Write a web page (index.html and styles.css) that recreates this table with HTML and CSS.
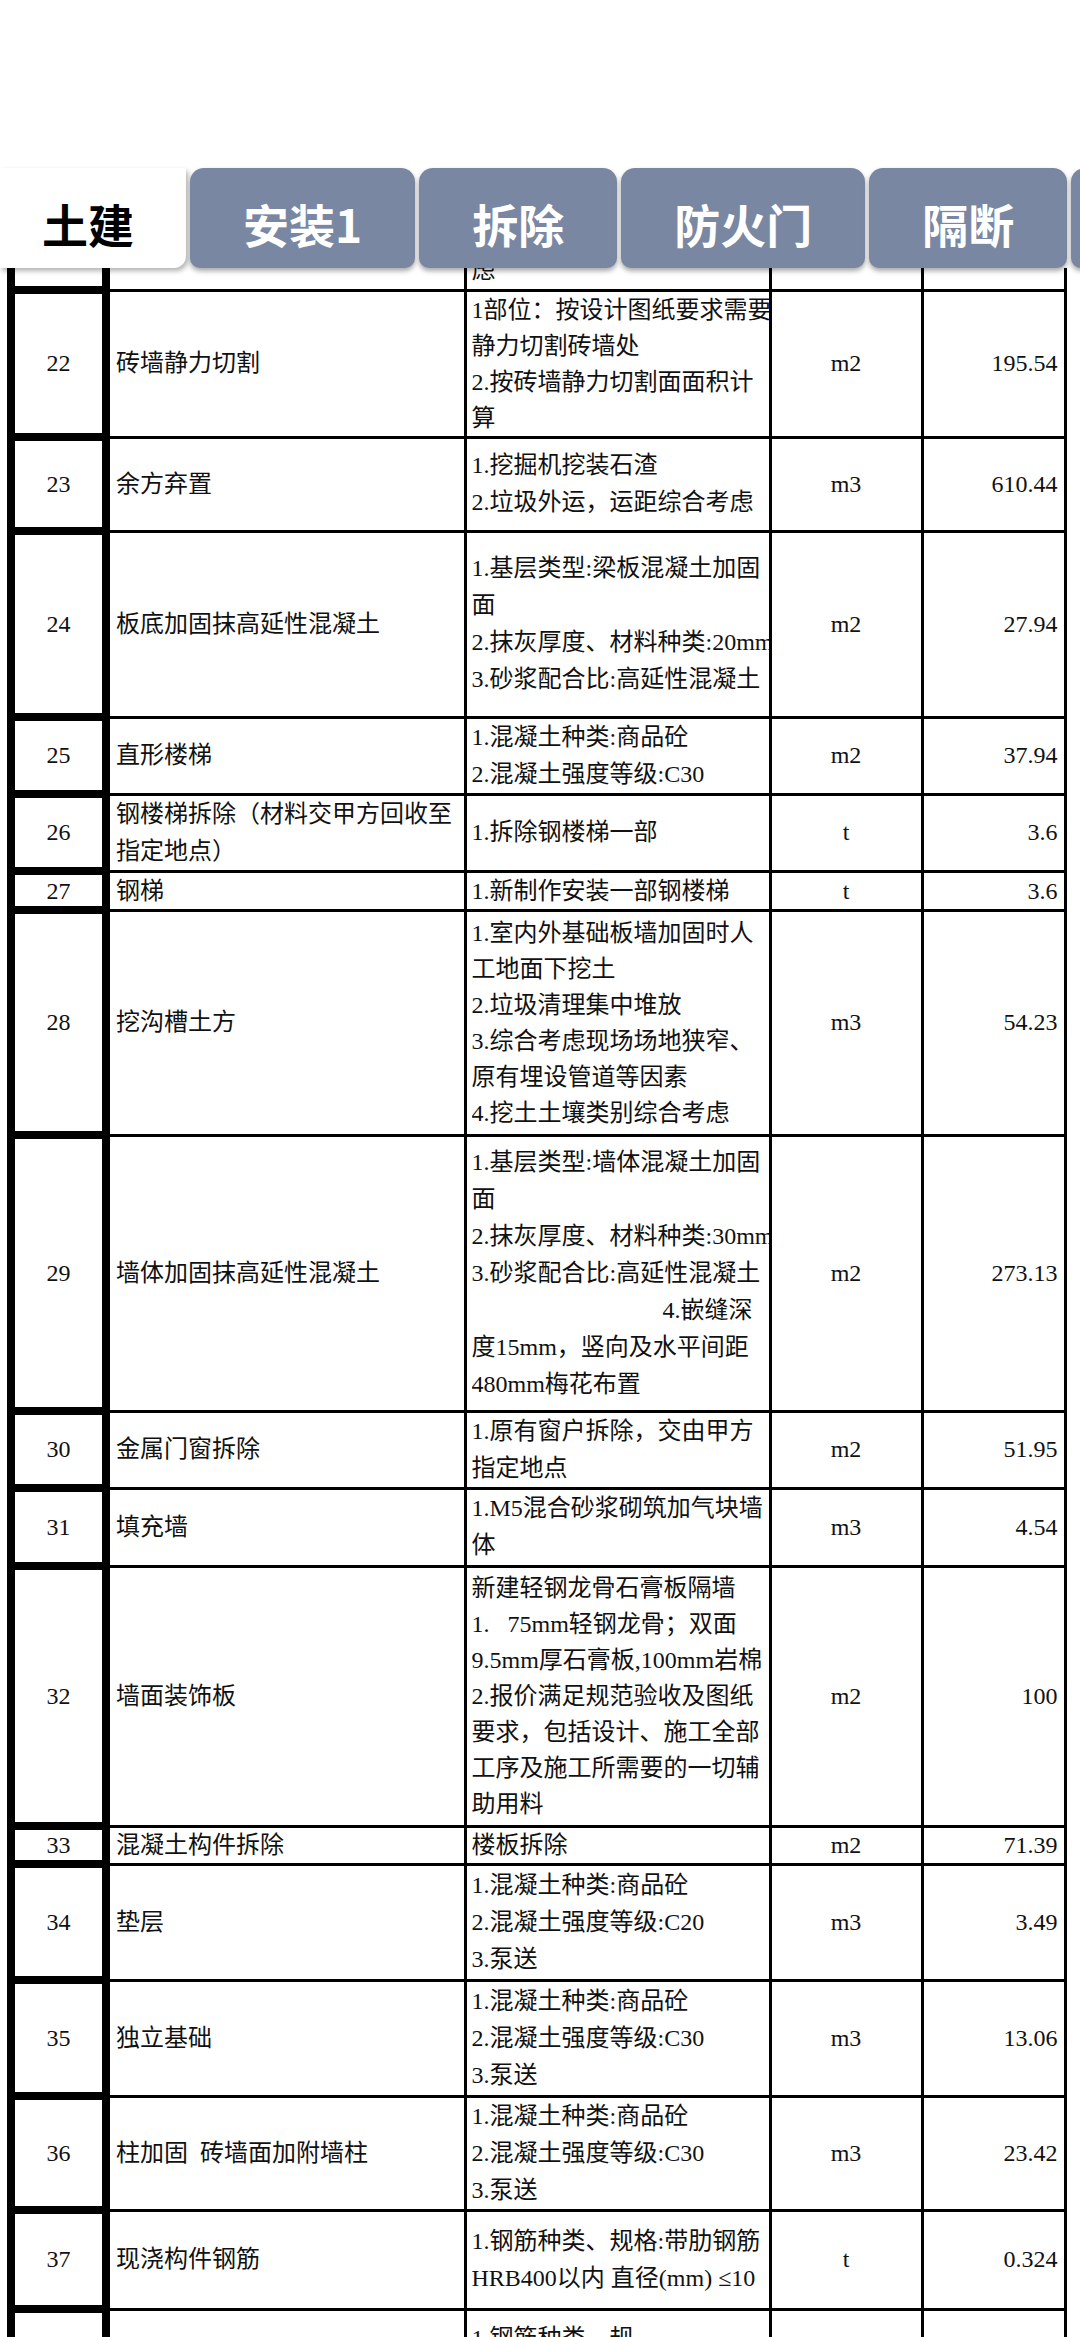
FILE: index.html
```html
<!DOCTYPE html>
<html lang="zh-CN">
<head>
<meta charset="utf-8">
<title>土建</title>
<link rel="stylesheet" href="styles.css">
</head>
<body>
<div class="screen">
  <div class="status"></div>
  <nav class="tabs">
    <div class="tab active">土建</div>
    <div class="tab">安装1</div>
    <div class="tab">拆除</div>
    <div class="tab">防火门</div>
    <div class="tab">隔断</div>
    <div class="tab">更多</div>
  </nav>
  <div class="sheet">
    <table class="grid">
      <colgroup>
        <col class="c-no"><col class="c-name"><col class="c-desc"><col class="c-unit"><col class="c-qty">
      </colgroup>
      <tbody>
        <tr class="h60"><td class="no"></td><td class="name"></td><td class="desc bottom"><div class="d">虑</div></td><td class="unit"></td><td class="qty"></td></tr>
        <tr class="h147 dense"><td class="no">22</td><td class="name">砖墙静力切割</td><td class="desc"><div class="d">1部位：按设计图纸要求需要<br>静力切割砖墙处<br>2.按砖墙静力切割面面积计<br>算</div></td><td class="unit">m2</td><td class="qty">195.54</td></tr>
        <tr class="h94"><td class="no">23</td><td class="name">余方弃置</td><td class="desc"><div class="d">1.挖掘机挖装石渣<br>2.垃圾外运，运距综合考虑</div></td><td class="unit">m3</td><td class="qty">610.44</td></tr>
        <tr class="h186"><td class="no">24</td><td class="name">板底加固抹高延性混凝土</td><td class="desc"><div class="d">1.基层类型:梁板混凝土加固<br>面<br>2.抹灰厚度、材料种类:20mm<br>3.砂浆配合比:高延性混凝土</div></td><td class="unit">m2</td><td class="qty">27.94</td></tr>
        <tr class="h77"><td class="no">25</td><td class="name">直形楼梯</td><td class="desc"><div class="d">1.混凝土种类:商品砼<br>2.混凝土强度等级:C30</div></td><td class="unit">m2</td><td class="qty">37.94</td></tr>
        <tr class="h76"><td class="no">26</td><td class="name">钢楼梯拆除（材料交甲方回收至指定地点）</td><td class="desc"><div class="d">1.拆除钢楼梯一部</div></td><td class="unit">t</td><td class="qty">3.6</td></tr>
        <tr class="h39 tight"><td class="no">27</td><td class="name">钢梯</td><td class="desc"><div class="d">1.新制作安装一部钢楼梯</div></td><td class="unit">t</td><td class="qty">3.6</td></tr>
        <tr class="h225 dense"><td class="no">28</td><td class="name">挖沟槽土方</td><td class="desc"><div class="d">1.室内外基础板墙加固时人<br>工地面下挖土<br>2.垃圾清理集中堆放<br>3.综合考虑现场场地狭窄、<br>原有埋设管道等因素<br>4.挖土土壤类别综合考虑</div></td><td class="unit">m3</td><td class="qty">54.23</td></tr>
        <tr class="h276"><td class="no">29</td><td class="name">墙体加固抹高延性混凝土</td><td class="desc"><div class="d">1.基层类型:墙体混凝土加固<br>面<br>2.抹灰厚度、材料种类:30mm<br>3.砂浆配合比:高延性混凝土<br><span class="gap"></span>4.嵌缝深<br>度15mm，竖向及水平间距<br>480mm梅花布置</div></td><td class="unit">m2</td><td class="qty">273.13</td></tr>
        <tr class="h76"><td class="no">30</td><td class="name">金属门窗拆除</td><td class="desc"><div class="d">1.原有窗户拆除，交由甲方<br>指定地点</div></td><td class="unit">m2</td><td class="qty">51.95</td></tr>
        <tr class="h78"><td class="no">31</td><td class="name">填充墙</td><td class="desc"><div class="d">1.M5混合砂浆砌筑加气块墙<br>体</div></td><td class="unit">m3</td><td class="qty">4.54</td></tr>
        <tr class="h260 dense"><td class="no">32</td><td class="name">墙面装饰板</td><td class="desc"><div class="d">新建轻钢龙骨石膏板隔墙<br>1.&nbsp;&nbsp; 75mm轻钢龙骨；双面<br>9.5mm厚石膏板,100mm岩棉<br>2.报价满足规范验收及图纸<br>要求，包括设计、施工全部<br>工序及施工所需要的一切辅<br>助用料</div></td><td class="unit">m2</td><td class="qty">100</td></tr>
        <tr class="h38 tight"><td class="no">33</td><td class="name">混凝土构件拆除</td><td class="desc"><div class="d">楼板拆除</div></td><td class="unit">m2</td><td class="qty">71.39</td></tr>
        <tr class="h116"><td class="no">34</td><td class="name">垫层</td><td class="desc"><div class="d">1.混凝土种类:商品砼<br>2.混凝土强度等级:C20<br>3.泵送</div></td><td class="unit">m3</td><td class="qty">3.49</td></tr>
        <tr class="h116"><td class="no">35</td><td class="name">独立基础</td><td class="desc"><div class="d">1.混凝土种类:商品砼<br>2.混凝土强度等级:C30<br>3.泵送</div></td><td class="unit">m3</td><td class="qty">13.06</td></tr>
        <tr class="h113"><td class="no">36</td><td class="name">柱加固&nbsp; 砖墙面加附墙柱</td><td class="desc"><div class="d">1.混凝土种类:商品砼<br>2.混凝土强度等级:C30<br>3.泵送</div></td><td class="unit">m3</td><td class="qty">23.42</td></tr>
        <tr class="h99"><td class="no">37</td><td class="name">现浇构件钢筋</td><td class="desc"><div class="d">1.钢筋种类、规格:带肋钢筋<br>HRB400以内 直径(mm) ≤10</div></td><td class="unit">t</td><td class="qty">0.324</td></tr>
        <tr class="h96"><td class="no">38</td><td class="name">现浇构件钢筋</td><td class="desc"><div class="d">1.钢筋种类、规<br>格:HRB400以内直径(mm)</div></td><td class="unit">t</td><td class="qty">1.09</td></tr>
      </tbody>
    </table>
  </div>
</div>
</body>
</html>
```

FILE: styles.css
```css
html, body {
  margin: 0;
  padding: 0;
  background: #fff;
}

body {
  width: 1080px;
  height: 2337px;
  overflow: hidden;
  font-family: "Liberation Serif", "Noto Sans CJK SC", serif;
  color: #111;
}

.screen {
  width: 1080px;
  height: 2337px;
  overflow: hidden;
  background: #fff;
}

.status {
  height: 168px;
}

/* ---------- sheet tabs ---------- */
.tabs {
  display: flex;
  gap: 4px;
  height: 100px;
  position: relative;
  z-index: 2;
}

.tab {
  flex: 0 0 auto;
  height: 100px;
  box-sizing: border-box;
  padding: 10px 53px 0;
  line-height: 90px;
  font-family: "Noto Sans CJK SC", sans-serif;
  font-weight: 700;
  font-size: 46px;
  color: #fff;
  background: #7a87a2;
  border-radius: 14px 14px 10px 10px;
  box-shadow: 0 3px 5px rgba(0, 0, 0, 0.35);
  white-space: nowrap;
}

.tab.active {
  background: #fff;
  color: #000;
  padding: 10px 52px 0 42px;
  border-radius: 0 0 12px 0;
  box-shadow: 2px 3px 5px rgba(0, 0, 0, 0.3);
}

/* ---------- sheet ---------- */
.sheet {
  height: 2069px;
  overflow: hidden;
  position: relative;
  z-index: 1;
}

.grid {
  border-collapse: collapse;
  table-layout: fixed;
  width: 1054px;
  margin: -42px 0 0 7px;
  font-size: 24px;
  line-height: 37px;
}

.c-no { width: 95px; }
.c-name { width: 359px; }
.c-desc { width: 305px; }
.c-unit { width: 152px; }
.c-qty { width: 143px; }

.grid td {
  border: 3px solid #000;
  padding: 0 5px;
  vertical-align: middle;
  overflow: hidden;
}

.grid td.no {
  border: 8px solid #000;
  text-align: center;
  padding: 0;
}

.grid td.name {
  padding-left: 6px;
  padding-right: 4px;
}

.grid td.desc {
  padding: 0 0 0 5px;
}

.grid td.desc.bottom {
  vertical-align: bottom;
}

.d {
  white-space: nowrap;
  overflow: hidden;
}

.gap {
  display: inline-block;
  width: 191px;
}

.grid td.unit {
  text-align: center;
}

.grid td.qty {
  text-align: right;
  padding-right: 6px;
}

.dense .d { line-height: 36px; }
.tight td { line-height: 26px; }

.h60 { height: 60px; }
.h147 { height: 147px; }
.h94 { height: 94px; }
.h186 { height: 186px; }
.h77 { height: 77px; }
.h76 { height: 76px; }
.h39 { height: 39px; }
.h225 { height: 225px; }
.h276 { height: 276px; }
.h78 { height: 78px; }
.h260 { height: 260px; }
.h38 { height: 38px; }
.h116 { height: 116px; }
.h113 { height: 113px; }
.h99 { height: 99px; }
.h96 { height: 96px; }
```
